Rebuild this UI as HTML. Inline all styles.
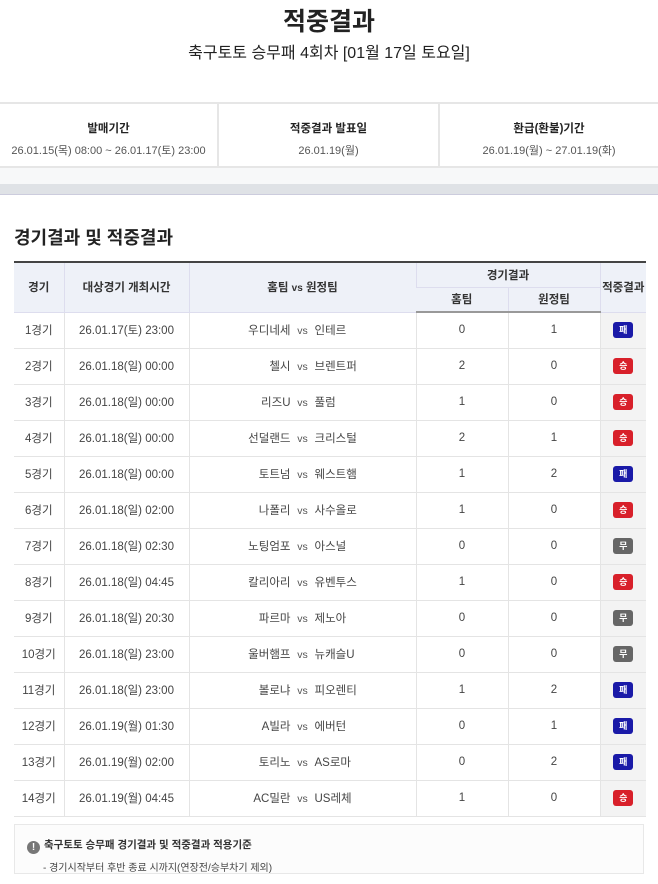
<!DOCTYPE html>
<html><head><meta charset="utf-8"><style>
*{margin:0;padding:0;box-sizing:border-box}
body{width:658px;height:884px;background:#fff;font-family:"Liberation Sans","Noto Sans CJK KR",sans-serif;color:#222;position:relative;overflow:hidden}
h1{position:absolute;top:7px;left:0;width:658px;text-align:center;font-size:25px;font-weight:bold;line-height:30px}
.sub{position:absolute;top:43px;left:0;width:658px;text-align:center;font-size:16px;line-height:22px}
.info{position:absolute;top:102px;left:0;width:658px;height:66px;border-top:2px solid #e6e6e6;border-bottom:2px solid #e6e6e6;display:flex}
.info div{text-align:center;font-size:11px;color:#555;padding-top:14px;line-height:22px}
.info b{display:block;color:#222;font-size:11.5px}
.band1{position:absolute;top:168px;left:0;width:658px;height:16px;background:#f7f8f9}
.band2{position:absolute;top:184px;left:0;width:658px;height:11px;background:#dfe2e6;border-bottom:1px solid #ccd}
h2{position:absolute;top:226px;left:14px;font-size:18px;font-weight:bold;line-height:24px}
table{position:absolute;top:261px;left:14px;width:632px;border-collapse:collapse;font-size:11.5px;color:#444;table-layout:fixed}
th{background:#eef1f8;font-weight:600;color:#333;border-left:1px solid #dde;border-bottom:1px solid #dde;height:25px}
thead tr:first-child th{border-top:2px solid #444}
thead tr:last-child th{border-bottom:2px solid #999}
th:first-child,td:first-child{border-left:none}
td{height:36px;text-align:center;border-left:1px solid #e4e4e4;border-bottom:1px solid #e4e4e4}
td.r{background:#f3f3f3}
.h{display:inline-block;width:100px;text-align:right}
.a{display:inline-block;width:100px;text-align:left}
.vs{display:inline-block;width:24px;text-align:center;font-size:10.5px;color:#555}
.bd{display:inline-block;width:20px;height:16px;line-height:16px;border-radius:3px;color:#fff;font-size:9px;font-weight:bold}
.L{background:#1a1aa8}.W{background:#d8202a}.D{background:#666}
.note{position:absolute;top:824px;left:14px;width:630px;height:50px;border:1px solid #e8e8e8;background:#fcfcfc;font-size:10.5px}
.note .t{position:absolute;top:12px;left:12px;font-weight:bold;color:#333}
.note .t i{display:inline-block;width:13px;height:13px;border-radius:50%;background:#777;color:#fff;font-style:normal;text-align:center;line-height:13px;font-size:10px;margin-right:4px;vertical-align:-2px}
.note .d{position:absolute;top:34px;left:28px;color:#444;font-size:10px}
</style></head><body>
<h1>적중결과</h1>
<div class="sub">축구토토 승무패 4회차 [01월 17일 토요일]</div>
<div class="info">
<div style="width:219px;border-right:2px solid #e6e6e6"><b>발매기간</b>26.01.15(목) 08:00 ~ 26.01.17(토) 23:00</div>
<div style="width:221px;border-right:2px solid #e6e6e6"><b>적중결과 발표일</b>26.01.19(월)</div>
<div style="width:218px"><b>환급(환불)기간</b>26.01.19(월) ~ 27.01.19(화)</div>
</div>
<div class="band1"></div><div class="band2"></div>
<h2>경기결과 및 적중결과</h2>
<table>
<colgroup><col style="width:50px"><col style="width:125px"><col style="width:227px"><col style="width:92px"><col style="width:92px"><col style="width:46px"></colgroup>
<thead>
<tr><th rowspan="2">경기</th><th rowspan="2">대상경기 개최시간</th><th rowspan="2">홈팀 <span style="font-size:10px">vs</span> 원정팀</th><th colspan="2">경기결과</th><th rowspan="2">적중결과</th></tr>
<tr><th>홈팀</th><th>원정팀</th></tr>
</thead>
<tbody>
<tr><td>1경기</td><td>26.01.17(토) 23:00</td><td><span class="h">우디네세</span><span class="vs">vs</span><span class="a">인테르</span></td><td>0</td><td>1</td><td class="r"><span class="bd L">패</span></td></tr>
<tr><td>2경기</td><td>26.01.18(일) 00:00</td><td><span class="h">첼시</span><span class="vs">vs</span><span class="a">브렌트퍼</span></td><td>2</td><td>0</td><td class="r"><span class="bd W">승</span></td></tr>
<tr><td>3경기</td><td>26.01.18(일) 00:00</td><td><span class="h">리즈U</span><span class="vs">vs</span><span class="a">풀럼</span></td><td>1</td><td>0</td><td class="r"><span class="bd W">승</span></td></tr>
<tr><td>4경기</td><td>26.01.18(일) 00:00</td><td><span class="h">선덜랜드</span><span class="vs">vs</span><span class="a">크리스털</span></td><td>2</td><td>1</td><td class="r"><span class="bd W">승</span></td></tr>
<tr><td>5경기</td><td>26.01.18(일) 00:00</td><td><span class="h">토트넘</span><span class="vs">vs</span><span class="a">웨스트햄</span></td><td>1</td><td>2</td><td class="r"><span class="bd L">패</span></td></tr>
<tr><td>6경기</td><td>26.01.18(일) 02:00</td><td><span class="h">나폴리</span><span class="vs">vs</span><span class="a">사수올로</span></td><td>1</td><td>0</td><td class="r"><span class="bd W">승</span></td></tr>
<tr><td>7경기</td><td>26.01.18(일) 02:30</td><td><span class="h">노팅엄포</span><span class="vs">vs</span><span class="a">아스널</span></td><td>0</td><td>0</td><td class="r"><span class="bd D">무</span></td></tr>
<tr><td>8경기</td><td>26.01.18(일) 04:45</td><td><span class="h">칼리아리</span><span class="vs">vs</span><span class="a">유벤투스</span></td><td>1</td><td>0</td><td class="r"><span class="bd W">승</span></td></tr>
<tr><td>9경기</td><td>26.01.18(일) 20:30</td><td><span class="h">파르마</span><span class="vs">vs</span><span class="a">제노아</span></td><td>0</td><td>0</td><td class="r"><span class="bd D">무</span></td></tr>
<tr><td>10경기</td><td>26.01.18(일) 23:00</td><td><span class="h">울버햄프</span><span class="vs">vs</span><span class="a">뉴캐슬U</span></td><td>0</td><td>0</td><td class="r"><span class="bd D">무</span></td></tr>
<tr><td>11경기</td><td>26.01.18(일) 23:00</td><td><span class="h">볼로냐</span><span class="vs">vs</span><span class="a">피오렌티</span></td><td>1</td><td>2</td><td class="r"><span class="bd L">패</span></td></tr>
<tr><td>12경기</td><td>26.01.19(월) 01:30</td><td><span class="h">A빌라</span><span class="vs">vs</span><span class="a">에버턴</span></td><td>0</td><td>1</td><td class="r"><span class="bd L">패</span></td></tr>
<tr><td>13경기</td><td>26.01.19(월) 02:00</td><td><span class="h">토리노</span><span class="vs">vs</span><span class="a">AS로마</span></td><td>0</td><td>2</td><td class="r"><span class="bd L">패</span></td></tr>
<tr><td>14경기</td><td>26.01.19(월) 04:45</td><td><span class="h">AC밀란</span><span class="vs">vs</span><span class="a">US레체</span></td><td>1</td><td>0</td><td class="r"><span class="bd W">승</span></td></tr>
</tbody>
</table>
<div class="note"><div class="t"><i>!</i>축구토토 승무패 경기결과 및 적중결과 적용기준</div><div class="d">- 경기시작부터 후반 종료 시까지(연장전/승부차기 제외)</div></div>
</body></html>
